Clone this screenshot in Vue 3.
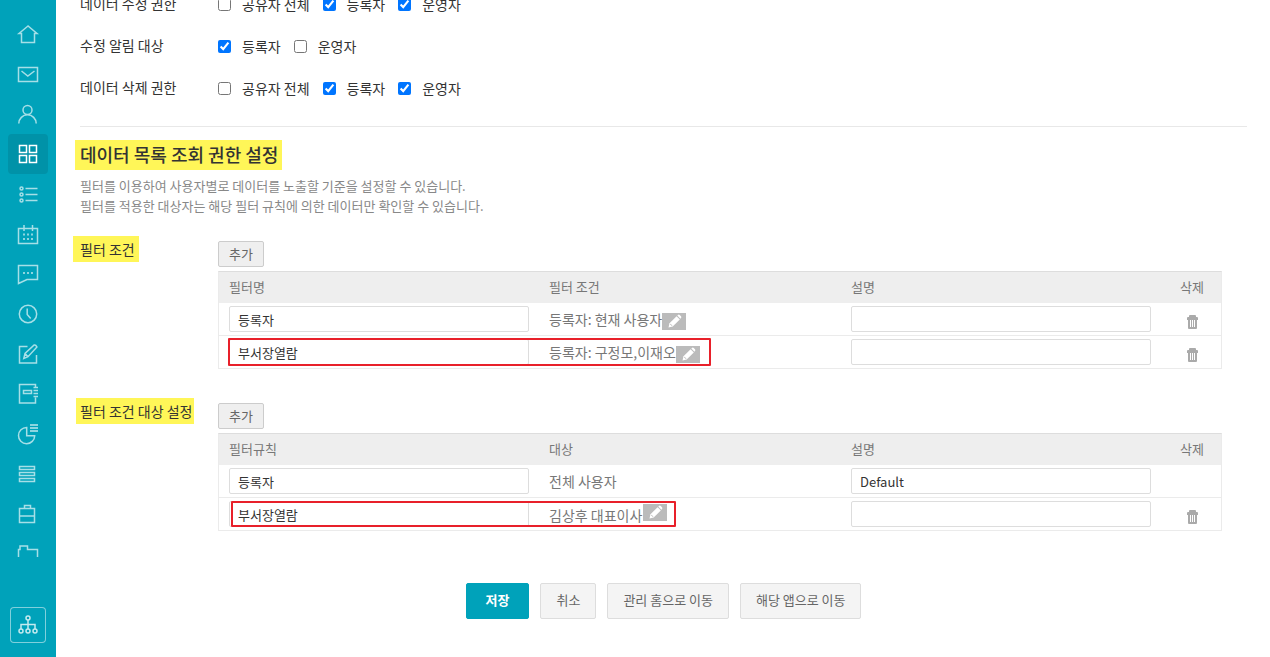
<script setup>
import { ref } from 'vue'

const menu = [
  { name: '홈', d: 'M20 12 11 19.5h2.5v9h13v-9H29z' },
  { name: '메일', d: 'M10.5 13.5h19v14h-19zM13.5 17l6.3 5 6.7-5' },
  { name: '주소록', d: 'M24 16a4.5 4.5 0 1 1-9 0 4.5 4.5 0 0 1 9 0zM10.8 29.5a8.7 8.7 0 0 1 17.4 0' },
  { name: '앱', active: true, d: 'M11.5 11.5h7v7h-7zM21.5 11.5h7v7h-7zM11.5 21.5h7v7h-7zM21.5 21.5h7v7h-7z' },
  { name: '목록', d: 'M15 14.5a1.5 1.5 0 1 1-3 0 1.5 1.5 0 0 1 3 0zM15 20.5a1.5 1.5 0 1 1-3 0 1.5 1.5 0 0 1 3 0zM15 26.5a1.5 1.5 0 1 1-3 0 1.5 1.5 0 0 1 3 0zM17.5 14.5h12M17.5 20.5h12M17.5 26.5h12' },
  { name: '캘린더', d: 'M10.5 14.5h19v15h-19zM16 11v6M24.5 11v6', dots: 'M15 20.5h2M19 20.5h2M23 20.5h2M15 25h2M19 25h2M23 25h2' },
  { name: '대화', d: 'M10.5 11.5h19v14H19l-8.5 4z', dots: 'M15 19h2M19 19h2M23 19h2' },
  { name: '기록', d: 'M28.7 20a8.7 8.7 0 1 1-17.4 0 8.7 8.7 0 0 1 17.4 0zM19.2 14.5v6l3.5 4' },
  { name: '작성', d: 'M19.5 12.5h-8v16.5h17v-8M15.8 24.5l1.2-5 9.2-8.5q1.5-.5 2.8 2l-9 9.7zM17 19.5l3 3.2' },
  { name: '보고서', d: 'M27.5 13v-2.5h-16v18.5h16v-5.5M15.5 16.5h8v3h-8zM25.5 13.5h4.5M25.5 16.5h4.5M25.5 19.5h4.5M25.5 22.5h4.5' },
  { name: '통계', d: 'M18.7 13.5a8.1 8.1 0 1 0 8 8.2h-8z', dots: 'M22 11h8M22 14h8M22 17h8' },
  { name: '게시판', d: 'M11.5 12.5h15v3h-15zM11.5 18.5h15v3h-15zM11.5 24.5h15v3h-15z' },
  { name: '업무', d: 'M11.5 14.5h15v14h-15zM16.5 14.5v-3h6v3M11.5 22h15' },
  { name: '자료실', d: 'M10.5 30V15.5H12V12h7.500v3.500h10V30z' }
]

const permissions = ref([
  { label: '데이터 수정 권한', options: [['공유자 전체', false], ['등록자', true], ['운영자', true]] },
  { label: '수정 알림 대상', options: [['등록자', true], ['운영자', false]] },
  { label: '데이터 삭제 권한', options: [['공유자 전체', false], ['등록자', true], ['운영자', true]] }
])

const sections = ref([
  {
    key: 'filter',
    label: '필터 조건',
    heads: ['필터명', '필터 조건', '설명', '삭제'],
    rows: [
      { name: '등록자', value: '등록자: 현재 사용자', note: '', edit: true, removable: true },
      { name: '부서장열람', value: '등록자: 구정모,이재오', note: '', edit: true, removable: true, marked: true }
    ]
  },
  {
    key: 'target',
    label: '필터 조건 대상 설정',
    heads: ['필터규칙', '대상', '설명', '삭제'],
    rows: [
      { name: '등록자', value: '전체 사용자', note: 'Default', edit: false, removable: false },
      { name: '부서장열람', value: '김상후 대표이사', note: '', edit: true, removable: true, marked: true }
    ]
  }
])
</script>

<template>
  <div class="app">
    <aside class="sidebar">
      <nav class="menu">
        <a v-for="m in menu" :key="m.name" href="#" :class="{ active: m.active }" :aria-label="m.name">
          <svg viewBox="0 0 40 40" width="40" height="40">
            <path :d="m.d" />
            <path v-if="m.dots" class="dots" :d="m.dots" />
          </svg>
        </a>
      </nav>
      <button class="org" type="button" aria-label="조직도">
        <svg viewBox="0 0 36 36" width="36" height="36">
          <circle cx="18" cy="11" r="2" />
          <circle cx="11" cy="24" r="2" />
          <circle cx="18" cy="24" r="2" />
          <circle cx="25" cy="24" r="2" />
          <path d="M18 13v9M11 22v-4.5h14V22" />
        </svg>
      </button>
    </aside>

    <main class="content">
      <div class="permissions">
        <div v-for="(p, i) in permissions" :key="p.label" class="permission" role="group" :aria-label="p.label">
          <span class="field-label">{{ p.label }}</span>
          <div class="options">
            <label v-for="(o, j) in p.options" :key="o[0]" :for="`perm-${i}-${j}`">
              <input :id="`perm-${i}-${j}`" v-model="o[1]" type="checkbox" />{{ o[0] }}
            </label>
          </div>
        </div>
      </div>

      <hr />

      <h2><span class="mark">데이터 목록 조회 권한 설정</span></h2>
      <p class="desc">
        필터를 이용하여 사용자별로 데이터를 노출할 기준을 설정할 수 있습니다.<br />
        필터를 적용한 대상자는 해당 필터 규칙에 의한 데이터만 확인할 수 있습니다.
      </p>

      <section v-for="s in sections" :key="s.key" class="section" :class="s.key">
        <h3><span class="mark">{{ s.label }}</span></h3>
        <div class="section-body">
          <button class="add" type="button">추가</button>
          <table>
            <colgroup>
              <col class="c-input" /><col /><col class="c-input" /><col class="c-del" />
            </colgroup>
            <thead>
              <tr><th v-for="h in s.heads" :key="h" scope="col">{{ h }}</th></tr>
            </thead>
            <tbody>
              <tr v-for="r in s.rows" :key="r.name">
                <td>
                  <input v-model="r.name" type="text" :aria-label="s.heads[0]" />
                  <span v-if="r.marked" class="outline"></span>
                </td>
                <td>
                  <span class="value">{{ r.value }}</span>
                  <button v-if="r.edit" class="edit" type="button" aria-label="편집">
                    <svg viewBox="0 0 24 17" width="24" height="17">
                      <path d="M6.5 14.5 7.5 10.3 14.6 3.2 17.8 6.4 10.7 13.5z" fill="#fff" />
                      <path d="M15.3 2.5 16.3 1.7Q17 1.4 17.7 2L19 3.3Q19.5 4 19.2 4.8L18.4 5.7z" fill="#fff" />
                      <path d="M8.2 10.8 10 12.8" stroke="#bbb" stroke-width="1" />
                    </svg>
                  </button>
                </td>
                <td><input v-model="r.note" type="text" :aria-label="s.heads[2]" /></td>
                <td>
                  <button v-if="r.removable" class="trash" type="button" aria-label="삭제">
                    <svg viewBox="0 0 11 14" width="11" height="14">
                      <path d="M2 2V1q0-1 1-1h5q1 0 1 1v1h1q1 0 1 1v2H0V3q0-1 1-1zM1 5h9v8q0 1-1 1H2q-1 0-1-1z" fill="#aaa" />
                      <path d="M3.500 5v7M5.500 5v7M7.500 5v7" stroke="#fff" />
                    </svg>
                  </button>
                </td>
              </tr>
            </tbody>
          </table>
        </div>
      </section>

      <div class="actions">
        <button class="save" type="button">저장</button>
        <button type="button">취소</button>
        <button type="button">관리 홈으로 이동</button>
        <button type="button">해당 앱으로 이동</button>
      </div>
    </main>
  </div>
</template>

<style>
body {
  margin: 0;
  overflow: hidden;
}
</style>

<style scoped>
.app {
  display: flex;
  height: 100vh;
  background: #fff;
  color: #333;
  font: 14px/20px "Noto Sans CJK KR", sans-serif;
}
.app * {
  box-sizing: border-box;
}
button,
input {
  font-family: inherit;
}
button {
  cursor: pointer;
}

.sidebar {
  display: flex;
  flex: none;
  flex-direction: column;
  width: 56px;
  padding: 14px 8px;
  background: #00a2ba;
}
.menu {
  flex: 1;
  min-height: 0;
  margin-bottom: 50px;
  overflow: hidden;
}
.menu a {
  display: block;
  height: 40px;
  border-radius: 4px;
}
.menu a.active {
  background: #0092a8;
}
.sidebar svg {
  display: block;
  fill: none;
  stroke: #a6dfe7;
  stroke-width: 1.5;
}
.sidebar .active svg {
  stroke: #fff;
}
.sidebar .dots {
  stroke-width: 2;
  stroke: #8cd5df;
}
.org {
  align-self: center;
  width: 36px;
  height: 36px;
  padding: 0;
  border: 0;
  border-radius: 4px;
  background: none;
  box-shadow: inset 0 0 0 1px #80d0dc;
}
.sidebar .org svg {
  stroke: #c4eaef;
}

.content {
  flex: 1;
  min-width: 0;
  padding: 0 23px 0 24px;
  overflow: hidden;
}
.permissions {
  margin-top: -18px;
}
.permission {
  display: flex;
  align-items: center;
  height: 42px;
}
.field-label {
  flex: none;
  width: 138px;
}
.options {
  display: flex;
  gap: 13px;
  padding-top: 2px;
}
.options label {
  display: flex;
  align-items: center;
  gap: 11px;
}
.options input {
  width: 13px;
  height: 13px;
  margin: 0;
}
hr {
  height: 1px;
  margin: 18px 0 13px;
  border: 0;
  background: #e8e8e8;
}

.mark {
  display: inline-block;
  background: #fff658;
}
h2 {
  height: 30px;
  margin: 0 0 6px -5px;
  font-size: 18px;
  font-weight: 500;
  line-height: 28px;
}
h2 .mark {
  padding: 0 4px 2px 5px;
}
.desc {
  margin: 0 0 20px;
  color: #888;
  font-size: 13px;
}
.section {
  display: flex;
  padding-right: 25px;
}
.section + .section {
  margin-top: 29px;
}
h3 {
  flex: none;
  width: 138px;
  margin: 0;
  font-size: 14px;
  font-weight: 400;
  line-height: 26px;
  white-space: nowrap;
}
h3 .mark {
  margin-left: -7px;
  padding: 0 4px 0 7px;
}
.target h3 .mark {
  margin-left: -4px;
  padding: 0 2px 0 4px;
}
.section-body {
  flex: 1;
  min-width: 0;
  padding-top: 5px;
}
.add {
  display: block;
  height: 26px;
  margin-bottom: 4px;
  padding: 0 10px;
  border: 1px solid #ccc;
  border-radius: 2px;
  background: #efefef;
  color: #666;
  font-size: 13px;
  line-height: 24px;
}
table {
  width: 100%;
  table-layout: fixed;
  border: 1px solid #ebebeb;
  border-top-color: #ddd;
  border-bottom: 0;
  border-spacing: 0;
}
.c-input {
  width: 320px;
}
.c-del {
  width: 60px;
}
th {
  height: 31px;
  padding: 0 10px 2px;
  background: #eee;
  color: #777;
  font-size: 13px;
  font-weight: 400;
  text-align: left;
}
td {
  position: relative;
  height: 33px;
  padding: 0 10px;
  border-bottom: 1px solid #ebebeb;
  color: #777;
  line-height: 20px;
}
th:last-child,
td:last-child {
  padding-left: 12px;
  text-align: center;
}
td input {
  display: block;
  width: 300px;
  height: 26px;
  padding: 0 8px;
  border: 1px solid #ddd;
  border-radius: 2px;
  background: #fff;
  color: #333;
  font-size: 13px;
}
.edit,
.trash {
  display: inline-block;
  padding: 0;
  border: 0;
  background: none;
}
.edit svg,
.trash svg {
  display: block;
}
.edit {
  background: #bbb;
  vertical-align: -5px;
}
.target .edit {
  margin-left: 1px;
  vertical-align: 0;
}
.trash {
  margin-top: 2px;
  vertical-align: middle;
}
.outline {
  position: absolute;
  z-index: 1;
  top: 2px;
  left: 9px;
  width: 483px;
  height: 28px;
  border: 2px solid #e8202a;
  border-radius: 1px;
  pointer-events: none;
}
.target .outline {
  top: 3px;
  left: 12px;
  width: 445px;
  height: 26px;
}

.actions {
  display: flex;
  justify-content: center;
  gap: 11px;
  margin-top: 52px;
}
.actions button {
  height: 36px;
  padding: 0 15px 3px;
  border: 1px solid #ddd;
  border-radius: 2px;
  background: #f4f4f4;
  color: #666;
  font-size: 13px;
}
.actions .save {
  padding: 0 19px 3px;
  border-color: #00a2ba;
  background: #00a2ba;
  color: #fff;
  font-weight: 700;
}
</style>
